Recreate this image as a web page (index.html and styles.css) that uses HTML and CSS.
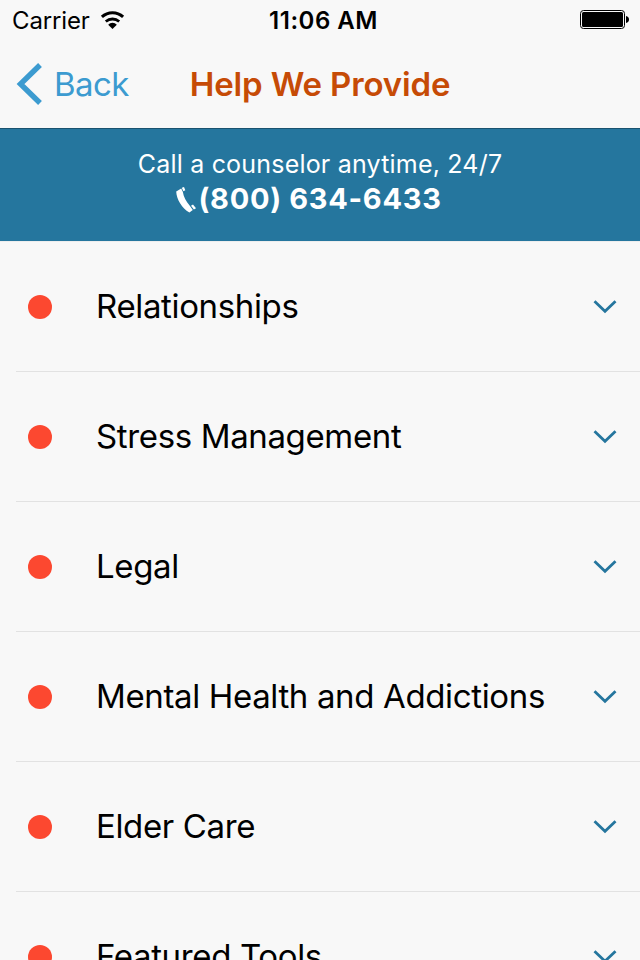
FILE: index.html
```html
<!DOCTYPE html>
<html lang="en">
<head>
    <meta charset="UTF-8">
    <meta name="viewport" content="width=device-width, initial-scale=1.0">
    <title>Help We Provide</title>
    <link rel="stylesheet" href="styles.css">
</head>
<body>
    <header>
        <div class="status-bar">
            <div class="carrier">
                <span>Carrier</span>
                <svg class="wifi" width="26" height="20" viewBox="0 0 26 20">
                    <path d="M1.9 6.9 A15.5 15.5 0 0 1 23.1 6.9" fill="none" stroke="#000" stroke-width="3"/>
                    <path d="M5.8 11.5 A10.3 10.3 0 0 1 19.2 11.5" fill="none" stroke="#000" stroke-width="2.8"/>
                    <path d="M12.5 19 L8.2 14.8 A5.6 5.6 0 0 1 16.8 14.8 Z" fill="#000"/>
                </svg>
            </div>
            <span class="time">11:06 AM</span>
            <svg class="battery" width="50" height="20" viewBox="0 0 50 20">
                <rect x="0.5" y="0.5" width="44" height="18" rx="3" fill="none" stroke="#000"/>
                <rect x="2" y="2" width="41" height="15" rx="1.5" fill="#000"/>
                <path d="M46 6 C50 6.5 50 12.5 46 13 Z" fill="#000"/>
            </svg>
        </div>
        <nav class="nav-bar">
            <a href="#" class="back">
                <svg width="28" height="42" viewBox="0 0 28 42">
                    <path d="M24 2 L4.5 21 L24 40" fill="none" stroke="#3c9bd0" stroke-width="5.4"/>
                </svg>
                <span>Back</span>
            </a>
            <h1>Help We Provide</h1>
        </nav>
    </header>

    <div class="call-banner">
        <p class="call-text">Call a counselor anytime, 24/7</p>
        <a href="tel:8006346433" class="call-number">
            <svg width="22" height="28" viewBox="0 0 22 28">
                <path d="M0.2 5.4 L5.2 2.6 L6.8 5.8 C7.6 11 10 15.6 13.6 19.4 L16.8 24 L13.4 26.4 C5.8 22 0.6 13.4 0.2 5.4 Z" fill="#fff"/>
                <path d="M5.8 1.8 L8 0.9 L9.3 4.2 L7.4 5.2 Z" fill="#fff"/>
                <path d="M15 19.8 L17 18.6 L20 22.2 L17.9 23.6 Z" fill="#fff"/>
            </svg>
            <span>(800) 634-6433</span>
        </a>
    </div>

    <ul class="topics">
        <li class="topic">
            <span class="dot"></span>
            <span class="topic-name">Relationships</span>
            <svg class="arrow" width="24" height="14" viewBox="0 0 24 14"><path d="M1.5 1.2 L12 11.2 L22.5 1.2"/></svg>
        </li>
        <li class="topic">
            <span class="dot"></span>
            <span class="topic-name">Stress Management</span>
            <svg class="arrow" width="24" height="14" viewBox="0 0 24 14"><path d="M1.5 1.2 L12 11.2 L22.5 1.2"/></svg>
        </li>
        <li class="topic">
            <span class="dot"></span>
            <span class="topic-name">Legal</span>
            <svg class="arrow" width="24" height="14" viewBox="0 0 24 14"><path d="M1.5 1.2 L12 11.2 L22.5 1.2"/></svg>
        </li>
        <li class="topic">
            <span class="dot"></span>
            <span class="topic-name">Mental Health and Addictions</span>
            <svg class="arrow" width="24" height="14" viewBox="0 0 24 14"><path d="M1.5 1.2 L12 11.2 L22.5 1.2"/></svg>
        </li>
        <li class="topic">
            <span class="dot"></span>
            <span class="topic-name">Elder Care</span>
            <svg class="arrow" width="24" height="14" viewBox="0 0 24 14"><path d="M1.5 1.2 L12 11.2 L22.5 1.2"/></svg>
        </li>
        <li class="topic">
            <span class="dot"></span>
            <span class="topic-name">Featured Tools</span>
            <svg class="arrow" width="24" height="14" viewBox="0 0 24 14"><path d="M1.5 1.2 L12 11.2 L22.5 1.2"/></svg>
        </li>
    </ul>
</body>
</html>
```
FILE: styles.css
```css
/* General */
* {
    box-sizing: border-box;
}

body {
    font-family: Inter, "Liberation Sans", sans-serif;
    margin: 0;
    height: 960px;
    overflow: hidden;
    background-color: #f8f8f8;
    color: #000;
}

svg {
    display: block;
    flex: none;
}

a {
    text-decoration: none;
}

header {
    height: 128px;
}

/* Status bar */
.status-bar {
    display: grid;
    grid-template-columns: 1fr auto 1fr;
    align-items: center;
    height: 40px;
    padding: 0 10px 0 12px;
    font-size: 24px;
}

.carrier {
    display: flex;
    align-items: center;
    gap: 10px;
    letter-spacing: -0.15px;
}

.time {
    padding: 1px 0 0 5px;
    font-weight: 600;
    letter-spacing: 0.5px;
}

.battery {
    justify-self: end;
}

/* Navigation */
.nav-bar {
    display: grid;
    grid-template-columns: 1fr auto 1fr;
    align-items: center;
    height: 88px;
    padding: 0 16px;
}

.back {
    display: flex;
    align-items: center;
    gap: 10px;
    color: #3c9bd0;
    font-size: 33px;
    letter-spacing: -0.6px;
}

h1 {
    margin: 0;
    color: #c64b06;
    font-size: 33px;
    font-weight: 600;
    letter-spacing: -0.15px;
}

/* Call banner */
.call-banner {
    height: 114px;
    padding-top: 19px;
    border-top: 1px solid #1a536f;
    border-bottom: 1px solid #eeeeee;
    background-color: #25769e;
    color: #fff;
    text-align: center;
}

.call-text {
    margin: 0;
    font-size: 25px;
    font-weight: 400;
    line-height: 32px;
    letter-spacing: 0.2px;
}

.call-number {
    display: flex;
    justify-content: center;
    padding: 1px 22px 0 0;
    color: #fff;
    font-size: 29px;
    font-weight: 700;
    line-height: 36px;
    letter-spacing: 0.7px;
}

.call-number svg {
    margin-top: 5px;
}

/* Topic list */
.topics {
    list-style: none;
    margin: 0;
    padding: 0 0 0 16px;
}

.topic {
    display: flex;
    align-items: center;
    height: 130px;
    padding: 0 23px 0 12px;
    border-bottom: 1px solid #e2e2e2;
}

.dot {
    width: 24px;
    height: 24px;
    border-radius: 50%;
    background-color: #fc4830;
}

.topic-name {
    flex: 1;
    margin-left: 44px;
    padding-bottom: 2px;
    font-size: 33px;
    letter-spacing: -0.36px;
}

.arrow path {
    fill: none;
    stroke: #25769e;
    stroke-width: 2.8;
}
```
